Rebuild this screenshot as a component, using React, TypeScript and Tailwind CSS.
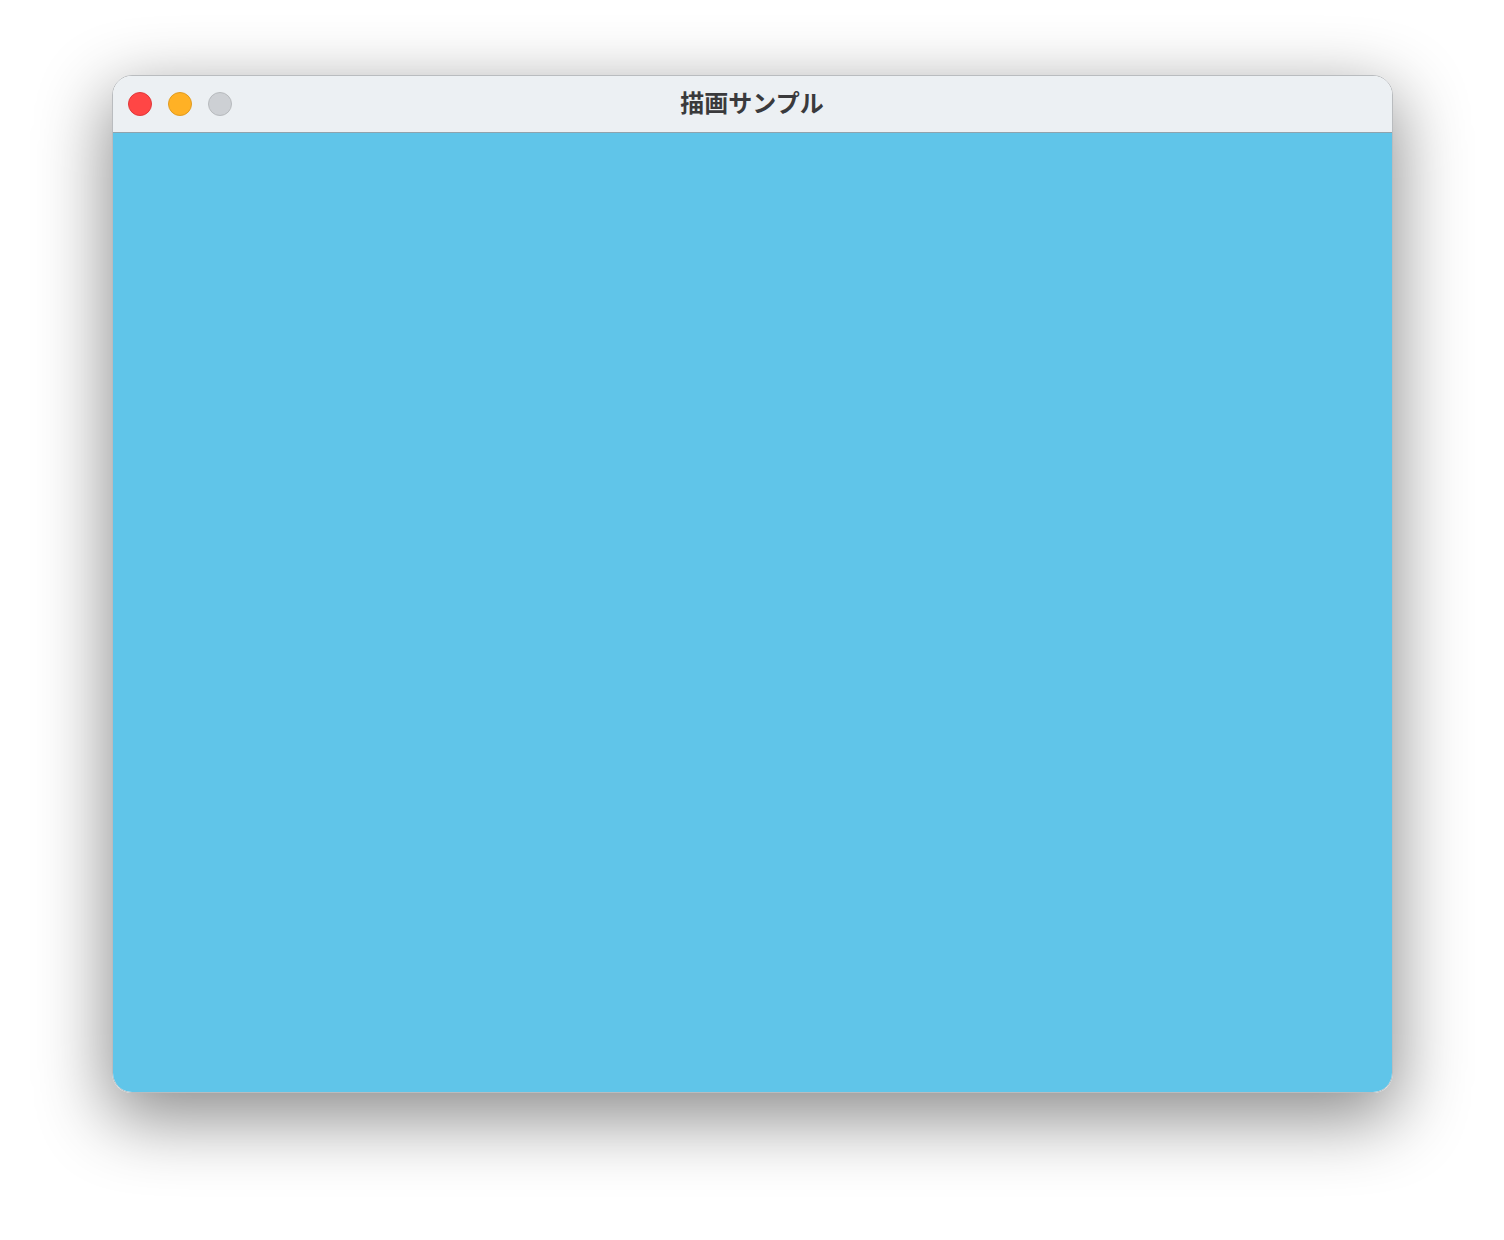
export default function App() {
  return (
    <div className="min-h-[1240px] w-full bg-white pt-[75px]">
      {/* window */}
      <div className="mx-auto flex w-[1281px] flex-col overflow-hidden rounded-[20px] border border-[#b9bcbf] shadow-[0_22px_70px_4px_rgba(0,0,0,0.45)]">
        {/* title bar */}
        <div className="relative flex h-[57px] items-center border-b border-[#8fa3ad] bg-[#ecf0f3] px-[15px]">
          <div className="flex gap-[16px]">
            <span className="h-[24px] w-[24px] rounded-full border border-[#e0383a] bg-[#ff4645]" />
            <span className="h-[24px] w-[24px] rounded-full border border-[#e09b20] bg-[#ffb125]" />
            <span className="h-[24px] w-[24px] rounded-full border border-[#b7babd] bg-[#cdd0d4]" />
          </div>
          <div className="pointer-events-none absolute inset-0 flex items-center justify-center pb-[5px]">
            <span className="font-['Noto_Sans_CJK_JP',sans-serif] text-[24px] font-bold leading-none text-[#3a3a3c]">
              描画サンプル
            </span>
          </div>
        </div>
        {/* drawing area */}
        <div className="h-[959px] bg-[#60c5e9]" />
      </div>
    </div>
  );
}
